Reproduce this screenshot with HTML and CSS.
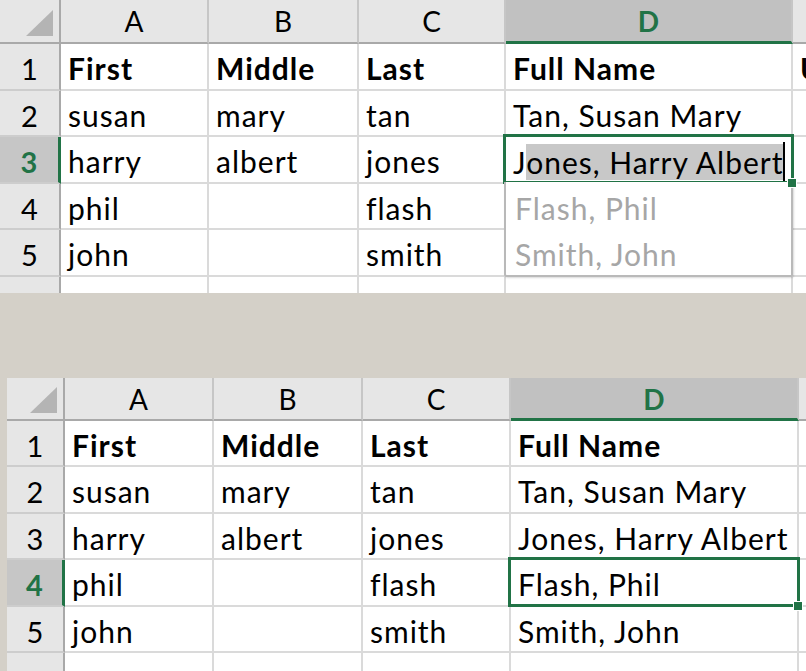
FILE: index.html
```html
<!DOCTYPE html>
<html>
<head lang="en">
    <meta charset="UTF-8">
    <title>Flash Fill</title>
    <link rel="stylesheet" href="styles.css">
</head>
<body>
    <!-- before: flash fill suggests the rest of the column -->
    <div class="sheet sheet-top">
        <div class="corner"><span class="tri"></span></div>
        <div class="col-head">A</div>
        <div class="col-head">B</div>
        <div class="col-head">C</div>
        <div class="col-head active">D</div>
        <div class="col-head"></div>

        <div class="row-head">1</div>
        <div class="cell bold">First</div>
        <div class="cell bold">Middle</div>
        <div class="cell bold">Last</div>
        <div class="cell bold">Full Name</div>
        <div class="cell bold">U</div>

        <div class="row-head">2</div>
        <div class="cell">susan</div>
        <div class="cell">mary</div>
        <div class="cell">tan</div>
        <div class="cell">Tan, Susan Mary</div>
        <div class="cell"></div>

        <div class="row-head active">3</div>
        <div class="cell">harry</div>
        <div class="cell">albert</div>
        <div class="cell">jones</div>
        <div class="cell editing">J<span class="picked">ones, Harry Albert</span><span class="caret"></span></div>
        <div class="cell"></div>

        <div class="row-head">4</div>
        <div class="cell">phil</div>
        <div class="cell"></div>
        <div class="cell">flash</div>
        <div class="cell suggest-host">
            <div class="suggest">
                <div class="suggest-row">Flash, Phil</div>
                <div class="suggest-row">Smith, John</div>
            </div>
        </div>
        <div class="cell"></div>

        <div class="row-head">5</div>
        <div class="cell">john</div>
        <div class="cell"></div>
        <div class="cell">smith</div>
        <div class="cell"></div>
        <div class="cell"></div>

        <div class="row-head"></div>
        <div class="cell"></div>
        <div class="cell"></div>
        <div class="cell"></div>
        <div class="cell"></div>
        <div class="cell"></div>
    </div>

    <!-- after: column filled in -->
    <div class="sheet sheet-bottom">
        <div class="corner"><span class="tri"></span></div>
        <div class="col-head">A</div>
        <div class="col-head">B</div>
        <div class="col-head">C</div>
        <div class="col-head active">D</div>
        <div class="col-head"></div>

        <div class="row-head">1</div>
        <div class="cell bold">First</div>
        <div class="cell bold">Middle</div>
        <div class="cell bold">Last</div>
        <div class="cell bold">Full Name</div>
        <div class="cell"></div>

        <div class="row-head">2</div>
        <div class="cell">susan</div>
        <div class="cell">mary</div>
        <div class="cell">tan</div>
        <div class="cell">Tan, Susan Mary</div>
        <div class="cell"></div>

        <div class="row-head">3</div>
        <div class="cell">harry</div>
        <div class="cell">albert</div>
        <div class="cell">jones</div>
        <div class="cell">Jones, Harry Albert</div>
        <div class="cell"></div>

        <div class="row-head active">4</div>
        <div class="cell">phil</div>
        <div class="cell"></div>
        <div class="cell">flash</div>
        <div class="cell selected">Flash, Phil</div>
        <div class="cell"></div>

        <div class="row-head">5</div>
        <div class="cell">john</div>
        <div class="cell"></div>
        <div class="cell">smith</div>
        <div class="cell">Smith, John</div>
        <div class="cell"></div>

        <div class="row-head last">6</div>
        <div class="cell"></div>
        <div class="cell"></div>
        <div class="cell"></div>
        <div class="cell"></div>
        <div class="cell"></div>
    </div>
</body>
</html>
```

FILE: styles.css
```css
*{
    padding: 0;
    margin: 0;
    box-sizing: border-box;
}
body{
    background: #d4d0c8;
    width: 806px;
    height: 671px;
    overflow: hidden;
    font-family: Lato, "Liberation Sans", sans-serif;
    font-size: 30px;
    color: #000;
}
.sheet{
    display: grid;
    overflow: hidden;
    background: #fff;
}
.sheet-top{
    width: 806px;
    height: 293px;
    grid-template-columns: 61px 148px 150px 147px 287px 40px;
    grid-template-rows: 44px repeat(5, 46.6px) 40px;
}
.sheet-bottom{
    width: 799px;
    height: 293px;
    margin-top: 85px;
    margin-left: 7px;
    grid-template-columns: 58px 149px 149px 148px 288px 40px;
    grid-template-rows: 43px repeat(5, 46.4px) 40px;
}
.corner{
    background: #e6e6e6;
    border-right: 2px solid #a9a9a9;
    border-bottom: 2px solid #a9a9a9;
    position: relative;
}
.tri{
    position: absolute;
    right: 6px;
    bottom: 6px;
    width: 27px;
    height: 26px;
    background: #b4b4b4;
    clip-path: polygon(100% 0, 100% 100%, 0 100%);
}
.col-head{
    background: #e6e6e6;
    border-right: 2px solid #c6c6c6;
    border-bottom: 2px solid #a9a9a9;
    text-align: center;
    line-height: 42px;
    font-size: 28px;
}
.col-head.active{
    background: #c1c1c1;
    color: #217346;
    font-weight: bold;
    border-bottom: 3px solid #217346;
}
.row-head{
    background: #e6e6e6;
    border-right: 2px solid #a9a9a9;
    border-bottom: 2px solid #cdcdcd;
    text-align: center;
    padding-top: 6px;
    font-size: 29px;
    line-height: 38px;
}
.row-head.last{
    padding-top: 11px;
}
.row-head.active{
    background: #c6c6c6;
    color: #217346;
    font-weight: bold;
    border-right: 3px solid #217346;
}
.cell{
    border-right: 2px solid #dadada;
    border-bottom: 2px solid #dadada;
    padding: 5px 0 0 7px;
    line-height: 38px;
    letter-spacing: 1px;
    white-space: nowrap;
    position: relative;
}
.bold{
    font-weight: bold;
}

/* cell being typed into */
.editing::after,
.selected::after{
    content: "";
    position: absolute;
    left: -3px;
    top: -3px;
    right: -3px;
    bottom: -2px;
    border: 3px solid #217346;
    pointer-events: none;
}
.editing::before,
.selected::before{
    content: "";
    position: absolute;
    right: -6px;
    bottom: -6px;
    width: 8px;
    height: 8px;
    background: #217346;
    border: 1px solid #fff;
    z-index: 2;
}
.picked{
    background: #c8c8c8;
}
.caret{
    display: inline-block;
    width: 2px;
    height: 40px;
    background: #000;
    vertical-align: -8px;
}

/* flash fill preview under the active cell */
.suggest-host{
    z-index: 1;
}
.suggest{
    position: absolute;
    left: -2px;
    top: -2px;
    width: 289px;
    height: 95px;
    background: #fff;
    border: 2px solid #b9b9b9;
    border-top: 0;
    border-radius: 0 0 3px 3px;
    box-shadow: 1px 1px 2px rgba(0,0,0,0.15);
}
.suggest-row{
    height: 46.5px;
    padding: 7px 0 0 9px;
    line-height: 38px;
    color: #a6a6a6;
}
```
